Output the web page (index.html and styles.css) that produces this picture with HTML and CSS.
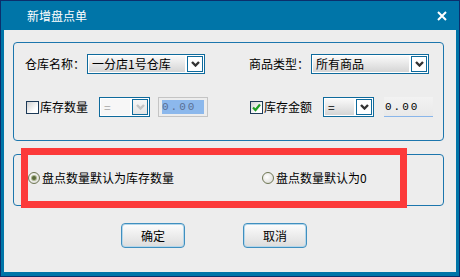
FILE: index.html
```html
<!DOCTYPE html>
<html lang="zh-CN">

<head>
    <meta charset="UTF-8" />
    <meta name="viewport" content="width=device-width, initial-scale=1.0" />
    <title>新增盘点单</title>
    <link rel="stylesheet" href="styles.css">
</head>

<body>
    <!-- 对话框窗口 -->
    <div class="window">
        <div class="titlebar">
            <span class="title">新增盘点单</span>
            <span class="close">
                <svg width="10" height="10" viewBox="0 0 10 10">
                    <path d="M1 1 L9 9 M9 1 L1 9" stroke="#fff" stroke-width="2" fill="none" />
                </svg>
            </span>
        </div>

        <div class="content">
            <!-- 筛选条件 -->
            <div class="group filter-group">
                <div class="row">
                    <div class="cell cell-left">
                        <span class="field-label">仓库名称：</span>
                        <div class="combo combo-wide">
                            <span class="combo-text">一分店1号仓库</span>
                            <span class="combo-btn">
                                <svg width="9" height="6" viewBox="0 0 9 6"><polyline points="1,1 4.5,4.5 8,1" fill="none" stroke="#333" stroke-width="2.4" /></svg>
                            </span>
                        </div>
                    </div>
                    <div class="cell">
                        <span class="field-label">商品类型：</span>
                        <div class="combo combo-wide">
                            <span class="combo-text">所有商品</span>
                            <span class="combo-btn">
                                <svg width="9" height="6" viewBox="0 0 9 6"><polyline points="1,1 4.5,4.5 8,1" fill="none" stroke="#333" stroke-width="2.4" /></svg>
                            </span>
                        </div>
                    </div>
                </div>

                <div class="row">
                    <div class="cell cell-left">
                        <span class="checkbox"></span>
                        <span class="check-label">库存数量</span>
                        <div class="combo combo-small disabled">
                            <span class="combo-text">=</span>
                            <span class="combo-btn">
                                <svg width="9" height="6" viewBox="0 0 9 6"><polyline points="1,1 4.5,4.5 8,1" fill="none" stroke="#c4c4c4" stroke-width="2.4" /></svg>
                            </span>
                        </div>
                        <div class="num-field disabled"><span class="selected">0.00</span></div>
                    </div>
                    <div class="cell">
                        <span class="checkbox checked">
                            <svg width="11" height="11" viewBox="0 0 11 11"><polyline points="2,5.5 4.5,8 9,2.5" fill="none" stroke="#1f9e24" stroke-width="2.2" /></svg>
                        </span>
                        <span class="check-label">库存金额</span>
                        <div class="combo combo-small">
                            <span class="combo-text">=</span>
                            <span class="combo-btn">
                                <svg width="9" height="6" viewBox="0 0 9 6"><polyline points="1,1 4.5,4.5 8,1" fill="none" stroke="#333" stroke-width="2.4" /></svg>
                            </span>
                        </div>
                        <div class="num-field">0.00</div>
                    </div>
                </div>
            </div>

            <!-- 盘点数量默认值 -->
            <div class="group option-group">
                <label class="radio-item first">
                    <span class="radio checked"></span>盘点数量默认为库存数量
                </label>
                <label class="radio-item">
                    <span class="radio"></span>盘点数量默认为0
                </label>
            </div>

            <!-- 红色标注框 -->
            <div class="mark-box"></div>

            <div class="buttons">
                <button class="btn">确定</button>
                <button class="btn">取消</button>
            </div>
        </div>
    </div>
</body>
</html>
```

FILE: styles.css
```css
/* 页面基础 */
body {
    margin: 0;
    font-family: "Noto Sans CJK SC", "Liberation Sans", sans-serif;
    font-size: 12px;
    color: #000;
}

/* 窗口外框 */
.window {
    width: 460px;
    height: 277px;
    box-sizing: border-box;
    border: 1px solid #0b2f6c;
    background: #0075a8;
    padding: 0 3px 4px 3px;
    display: flex;
    flex-direction: column;
}

/* 标题栏 */
.titlebar {
    height: 29px;
    display: flex;
    align-items: center;
    justify-content: space-between;
    padding: 0 9px 0 23px;
}

.title {
    color: #fff;
    font-size: 12px;
    line-height: 1;
}

.close {
    display: flex;
}

/* 内容区 */
.content {
    position: relative;
    flex: 1;
    background: #ededed;
    padding: 12px 0 0 9px;
}

/* 分组框 */
.group {
    width: 431px;
    box-sizing: border-box;
    border: 1px solid #1c76ad;
    border-radius: 4px;
}

.filter-group {
    height: 99px;
    padding: 11px 0 0 11px;
    display: flex;
    flex-direction: column;
    gap: 23px;
}

.row {
    display: flex;
    height: 20px;
}

.cell {
    display: flex;
    align-items: center;
}

.cell-left {
    width: 224px;
}

.field-label {
    width: 62px;
    line-height: 1;
}

/* 下拉框 */
.combo {
    display: flex;
    height: 20px;
    box-sizing: border-box;
    border: 1px solid #0e6a9c;
    background: #fff;
    padding: 1px;
}

.combo-wide {
    width: 118px;
}

.combo-small {
    width: 51px;
}

.combo-text {
    flex: 1;
    display: flex;
    align-items: center;
    padding-left: 3px;
    line-height: 1;
    background: linear-gradient(#f9f9f9, #d5d5d5);
}

.combo-btn {
    width: 16px;
    margin-left: 2px;
    box-sizing: border-box;
    border: 1px solid #0e6a9c;
    background: #fff;
    display: flex;
    align-items: center;
    justify-content: center;
}

.combo.disabled .combo-text {
    background: #f7f7f7;
    color: #a8a8a8;
}

.combo.disabled .combo-btn {
    background: linear-gradient(#f6f6f6, #e4e4e4);
}

/* 复选框 */
.checkbox {
    width: 13px;
    height: 13px;
    box-sizing: border-box;
    margin-left: 1px;
    border: 1px solid #1d3a58;
    background: linear-gradient(135deg, #d0d0d0, #fff 70%);
    display: flex;
    align-items: center;
    justify-content: center;
}

.check-label {
    width: 48px;
    margin-left: 1px;
    line-height: 1;
}

.cell-left .combo-small {
    margin-left: 12px;
}

.cell .combo-small {
    margin-left: 11px;
}

/* 数值输入框 */
.num-field {
    margin-left: 10px;
    width: 49px;
    height: 20px;
    box-sizing: border-box;
    border-bottom: 1px solid #8ab6ea;
    background: linear-gradient(#f2f2f2, #e9e9e9);
    padding-left: 1px;
    display: flex;
    align-items: center;
    font-family: "Liberation Mono", monospace;
    font-size: 11px;
    letter-spacing: 2px;
}

.num-field.disabled {
    margin-left: 8px;
    width: 50px;
    border: 1px solid #c4c4c4;
    background: #ededed;
    padding: 2px 3px;
}

.num-field .selected {
    flex: 1;
    height: 100%;
    display: flex;
    align-items: center;
    background: #8cb8ec;
    color: #5a6f94;
}

/* 单选区域 */
.option-group {
    margin-top: 13px;
    height: 52px;
    padding: 0 0 4px 14px;
    display: flex;
    align-items: center;
}

.radio-item {
    display: flex;
    align-items: center;
    line-height: 1;
}

.radio-item.first {
    width: 234px;
}

.radio {
    width: 12px;
    height: 12px;
    box-sizing: border-box;
    margin-right: 2px;
    border: 1px solid #6f7754;
    border-radius: 50%;
    background: radial-gradient(circle at 40% 40%, #fff, #d6d6d0);
    display: flex;
    align-items: center;
    justify-content: center;
}

.radio.checked::after {
    content: "";
    width: 4px;
    height: 4px;
    border-radius: 50%;
    background: #5b6a3c;
    box-shadow: 0 0 0 1px #a9b48c;
}

/* 红色标注框 */
.mark-box {
    position: absolute;
    left: 17px;
    top: 118px;
    width: 386px;
    height: 60px;
    box-sizing: border-box;
    border: 7px solid #fc3a3a;
}

/* 按钮 */
.buttons {
    margin-top: 17px;
    padding-left: 108px;
    display: flex;
    gap: 58px;
}

.btn {
    width: 64px;
    height: 25px;
    border: 1px solid #3f8fbf;
    border-radius: 4px;
    box-shadow: inset 0 0 0 1px #b4d6ea;
    background: linear-gradient(#fdfdfd, #dcdcdc);
    font-family: "Noto Sans CJK SC", sans-serif;
    font-size: 12px;
    color: #000;
    padding: 0;
}
```
